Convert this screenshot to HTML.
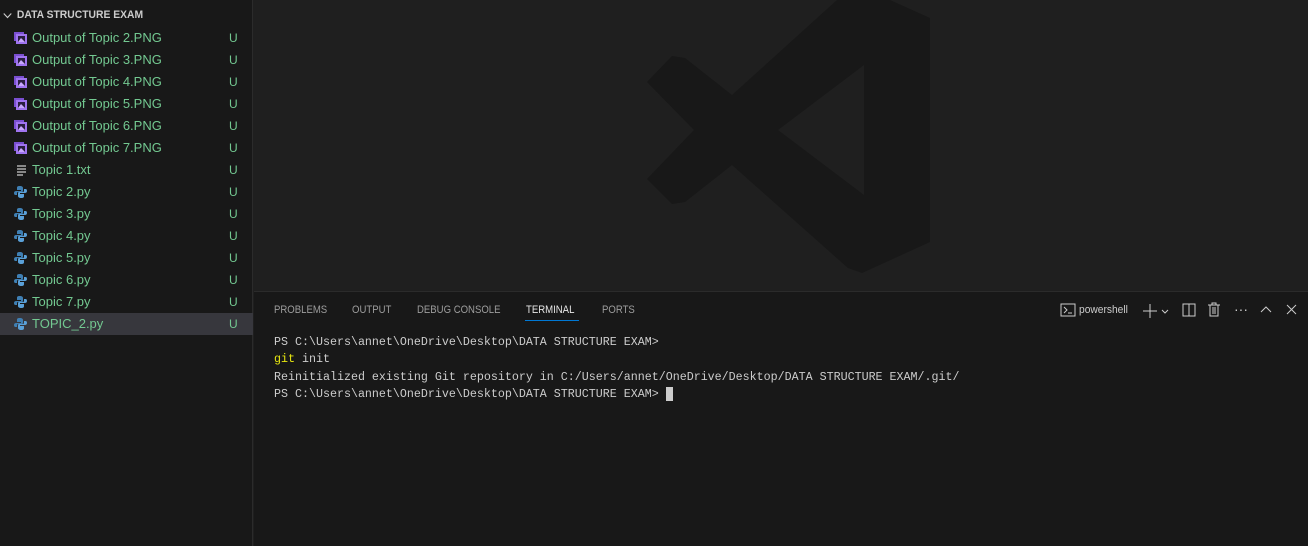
<!DOCTYPE html>
<html><head><meta charset="utf-8"><style>
*{margin:0;padding:0;box-sizing:border-box}
body{width:1308px;height:546px;background:#1f1f1f;font-family:"Liberation Sans",sans-serif;overflow:hidden;position:relative}
.side{position:absolute;left:0;top:0;width:253px;height:546px;background:#181818;border-right:1px solid #2b2b2b}
.hdr{position:absolute;left:0;top:6px;height:18px;font-size:11px;font-weight:bold;color:#cccccc;line-height:18px;padding-left:18px;transform:scaleX(0.94);transform-origin:left}
.hdr svg{position:absolute;left:3px;top:6px}
.row{position:absolute;left:0;width:253px;height:22px;line-height:22px;font-size:13px;color:#73c991}
.row .n{position:absolute;left:32px}
.row .u{position:absolute;left:229px;font-size:12px;color:#73c991}
.row svg{position:absolute;left:14px;top:5px}
.sel{background:#37373d}
.panel{position:absolute;left:254px;top:291px;width:1054px;height:255px;background:#181818;border-top:1px solid #2b2b2b}
.tab{position:absolute;top:12px;font-size:11px;color:#9d9d9d;transform:scaleX(0.87);transform-origin:left;white-space:nowrap}
.term{position:absolute;left:20px;top:42px;font-family:"Liberation Mono",monospace;font-size:11.67px;line-height:17.4px;color:#cccccc;white-space:pre}
.ic{position:absolute;color:#cccccc}
</style></head><body>
<svg style="position:absolute;left:0;top:0" width="1308" height="291">
<path fill="#181818" fill-rule="evenodd" d="M837 0 L890 0 L930 18 L930 242 L862 273 L848 268 L732 165 L685 202 L672 204 L647 179 L694 130 L647 82 L672 56 L685 58 L732 95 Z M864 65 L864 195 L778 130 Z"/>
</svg>
<div class="side">
<div class="hdr"><svg width="10" height="8" viewBox="0 0 10 8"><path d="M1 1.5 L5 5.5 L9 1.5" stroke="#ccc" stroke-width="1.2" fill="none"/></svg>DATA STRUCTURE EXAM</div>
</div>
<div id="rows"></div>
<div class="panel">
<div class="tab" style="left:20px">PROBLEMS</div>
<div class="tab" style="left:98px">OUTPUT</div>
<div class="tab" style="left:163px">DEBUG CONSOLE</div>
<div class="tab" style="left:272px;color:#e7e7e7">TERMINAL</div>
<div style="position:absolute;left:271px;top:28px;width:54px;height:1px;background:#0078d4"></div>
<div class="tab" style="left:348px">PORTS</div>
<svg class="ic" style="left:806px;top:11px" width="16" height="14" viewBox="0 0 16 14"><rect x="1" y="1" width="14" height="12" fill="none" stroke="#ccc"/><path d="M4 4 L7 7 L4 10 M8 10 H12" stroke="#ccc" fill="none"/></svg>
<div class="tab" style="left:825px;color:#cccccc;transform:scaleX(0.93)">powershell</div>
<svg style="position:absolute;left:889px;top:12px" width="28" height="14"><path d="M7 0V14M0 7H14" stroke="#ccc"/><path d="M19 6L22 9L25 6" stroke="#ccc" fill="none"/></svg>
<svg style="position:absolute;left:928px;top:11px" width="14" height="14"><rect x="1" y="1" width="12" height="12" fill="none" stroke="#ccc"/><path d="M7 1V13" stroke="#ccc"/></svg>
<svg style="position:absolute;left:953px;top:10px" width="14" height="15"><path d="M1 3H13M5 3V1H9V3M3 3V14H11V3M6 5V12M8 5V12" stroke="#ccc" fill="none"/></svg>
<div style="position:absolute;left:980px;top:9px;color:#ccc;font-size:14px">···</div>
<svg style="position:absolute;left:1006px;top:13px" width="12" height="8"><path d="M1 7L6 2L11 7" stroke="#ccc" fill="none"/></svg>
<svg style="position:absolute;left:1032px;top:12px" width="11" height="11"><path d="M1 1L10 10M10 1L1 10" stroke="#ccc"/></svg>
<div class="term">PS C:\Users\annet\OneDrive\Desktop\DATA STRUCTURE EXAM>
<span style="color:#e5e510">git</span> init
Reinitialized existing Git repository in C:/Users/annet/OneDrive/Desktop/DATA STRUCTURE EXAM/.git/
PS C:\Users\annet\OneDrive\Desktop\DATA STRUCTURE EXAM> <span style="background:#cccccc">&#160;</span></div>
</div>
<script>
var img='<svg width="13" height="12" viewBox="0 0 13 12"><rect x="0" y="0" width="10" height="9" fill="#7a4fd0"/><rect x="2" y="2" width="11" height="10" fill="#a074f0"/><rect x="4" y="4" width="7" height="6" fill="#2a1e40"/><path d="M4 10L7 6L11 10Z" fill="#c9a8ff"/></svg>';
var txt='<svg width="13" height="12" viewBox="0 0 13 12"><path d="M3 2H12M3 5H12M3 8H12M3 11H9" stroke="#cccccc" stroke-width="1.3"/></svg>';
var py='<svg width="13" height="12" viewBox="0 0 13 12"><path d="M6 0C3 0 3 1 3 2V4H7V5H2C0 5 0 7 0 7C0 9 1 9 2 9H3V7C3 6 4 6 5 6H8C9 6 9 5 9 4V2C9 1 8 0 6 0Z" fill="#3f7fb3"/><path d="M7 12C10 12 10 11 10 10V8H6V7H11C13 7 13 5 13 5C13 3 12 3 11 3H10V5C10 6 9 6 8 6H5C4 6 4 7 4 8V10C4 11 5 12 7 12Z" fill="#5aa0d8"/></svg>';
var items=[];
for(var i=2;i<=7;i++)items.push([img,'Output of Topic '+i+'.PNG']);
items.push([txt,'Topic 1.txt']);
for(var i=2;i<=7;i++)items.push([py,'Topic '+i+'.py']);
items.push([py,'TOPIC_2.py']);
var h='';
items.forEach(function(it,k){h+='<div class="row'+(k==13?' sel':'')+'" style="top:'+(27+22*k)+'px">'+it[0]+'<span class="n">'+it[1]+'</span><span class="u">U</span></div>';});
document.getElementById('rows').innerHTML=h;
</script>
</body></html>
